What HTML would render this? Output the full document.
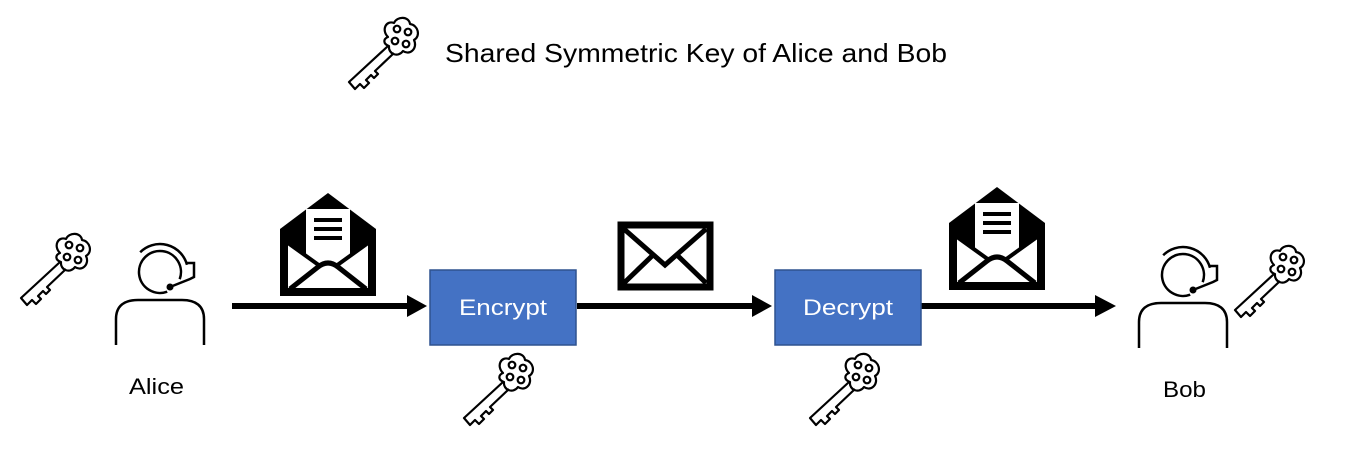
<!DOCTYPE html>
<html><head><meta charset="utf-8"><style>
html,body{margin:0;padding:0;background:#fff;width:1354px;height:452px;overflow:hidden}
svg{display:block}
text{font-family:"Liberation Sans",sans-serif}
</style></head><body>
<svg width="1354" height="452" viewBox="0 0 1354 452" xmlns="http://www.w3.org/2000/svg">
<defs>
<g id="key" fill="none" stroke="#000" stroke-width="2.2" stroke-linejoin="round">
  <path d="M42 19 C35 12 40 2 48 5 C51 -2 63 -2 64 6 C72 7 75 18 68 22 C72 30 64 38 57 33 C52 40 42 36 43 28 C37 26 37 21 42 19 Z"/>
  <circle cx="51" cy="11" r="3.3"/><circle cx="62" cy="14" r="3.3"/>
  <circle cx="49" cy="23" r="3.3"/><circle cx="60" cy="26" r="3.3"/>
  <path d="M42 28 L3 64 L9 71 L14 66 L18 70 L23 65 L20 62 L25 57 L28 60 L32 56 L29 53 L48 35"/>
</g>
<g id="person" fill="none" stroke="#000" stroke-width="2.5">
  <path d="M53.2 50.7 A21 21 0 1 1 65.7 38.2"/>
  <path d="M26.2 11.2 A28 28 0 0 1 73 23.8"/>
  <path d="M73 22 L80 22 L80 36 L76 38 L56 46"/>
  <circle cx="56" cy="46" r="3.5" fill="#000" stroke="none"/>
  <path d="M2 104 L2 78 C2 65 10 59 24 59 L68 59 C82 59 90 65 90 78 L90 104"/>
</g>
<g id="openenv">
  <path d="M0 36 L48 0 L96 36 L96 103 L0 103 Z" fill="#000"/>
  <rect x="26" y="16" width="44" height="48" fill="#fff"/>
  <rect x="34" y="25" width="28" height="4" fill="#000"/>
  <rect x="34" y="34" width="28" height="4" fill="#000"/>
  <rect x="34" y="43" width="28" height="4" fill="#000"/>
  <path d="M8 50 L26 62 L70 62 L88 50 L88 95 L8 95 Z" fill="#fff"/>
  <path d="M8 50 L40 73 M88 50 L56 73" stroke="#000" stroke-width="4"/>
  <path d="M10 96 L38 74 Q48 66 58 74 L86 96" fill="none" stroke="#000" stroke-width="5"/>
</g>
</defs>
<use href="#key" x="346" y="18"/>
<text x="445" y="62" font-size="26" textLength="502" lengthAdjust="spacingAndGlyphs">Shared Symmetric Key of Alice and Bob</text>
<use href="#key" x="18" y="234"/>
<use href="#key" x="461" y="354"/>
<use href="#key" x="807" y="354"/>
<use href="#key" x="1232" y="246"/>
<use href="#person" x="114" y="241"/>
<use href="#person" x="1137" y="244"/>
<text x="129" y="394" font-size="22" textLength="55" lengthAdjust="spacingAndGlyphs">Alice</text>
<text x="1163" y="397" font-size="22" textLength="43" lengthAdjust="spacingAndGlyphs">Bob</text>
<use href="#openenv" x="280" y="193"/>
<use href="#openenv" x="949" y="187"/>
<rect x="621" y="225" width="89" height="62" fill="#fff" stroke="#000" stroke-width="7"/>
<path d="M624 229 L665 265 L706 229 M624 283 L652 256 M706 283 L678 256" stroke="#000" stroke-width="5" fill="none"/>
<g stroke="#000" stroke-width="6">
<line x1="232" y1="306" x2="410" y2="306"/><path d="M407 295 L427 306 L407 317 Z" fill="#000" stroke="none"/>
<line x1="577" y1="306" x2="755" y2="306"/><path d="M752 295 L772 306 L752 317 Z" fill="#000" stroke="none"/>
<line x1="921" y1="306" x2="1098" y2="306"/><path d="M1095 295 L1116 306 L1095 317 Z" fill="#000" stroke="none"/>
</g>
<rect x="430" y="270" width="146" height="75" fill="#4472C4" stroke="#2F528F" stroke-width="1.5"/>
<rect x="775" y="270" width="146" height="75" fill="#4472C4" stroke="#2F528F" stroke-width="1.5"/>
<text x="459" y="315" font-size="22" fill="#fff" textLength="88" lengthAdjust="spacingAndGlyphs">Encrypt</text>
<text x="803" y="315" font-size="22" fill="#fff" textLength="90" lengthAdjust="spacingAndGlyphs">Decrypt</text>
</svg>
</body></html>
